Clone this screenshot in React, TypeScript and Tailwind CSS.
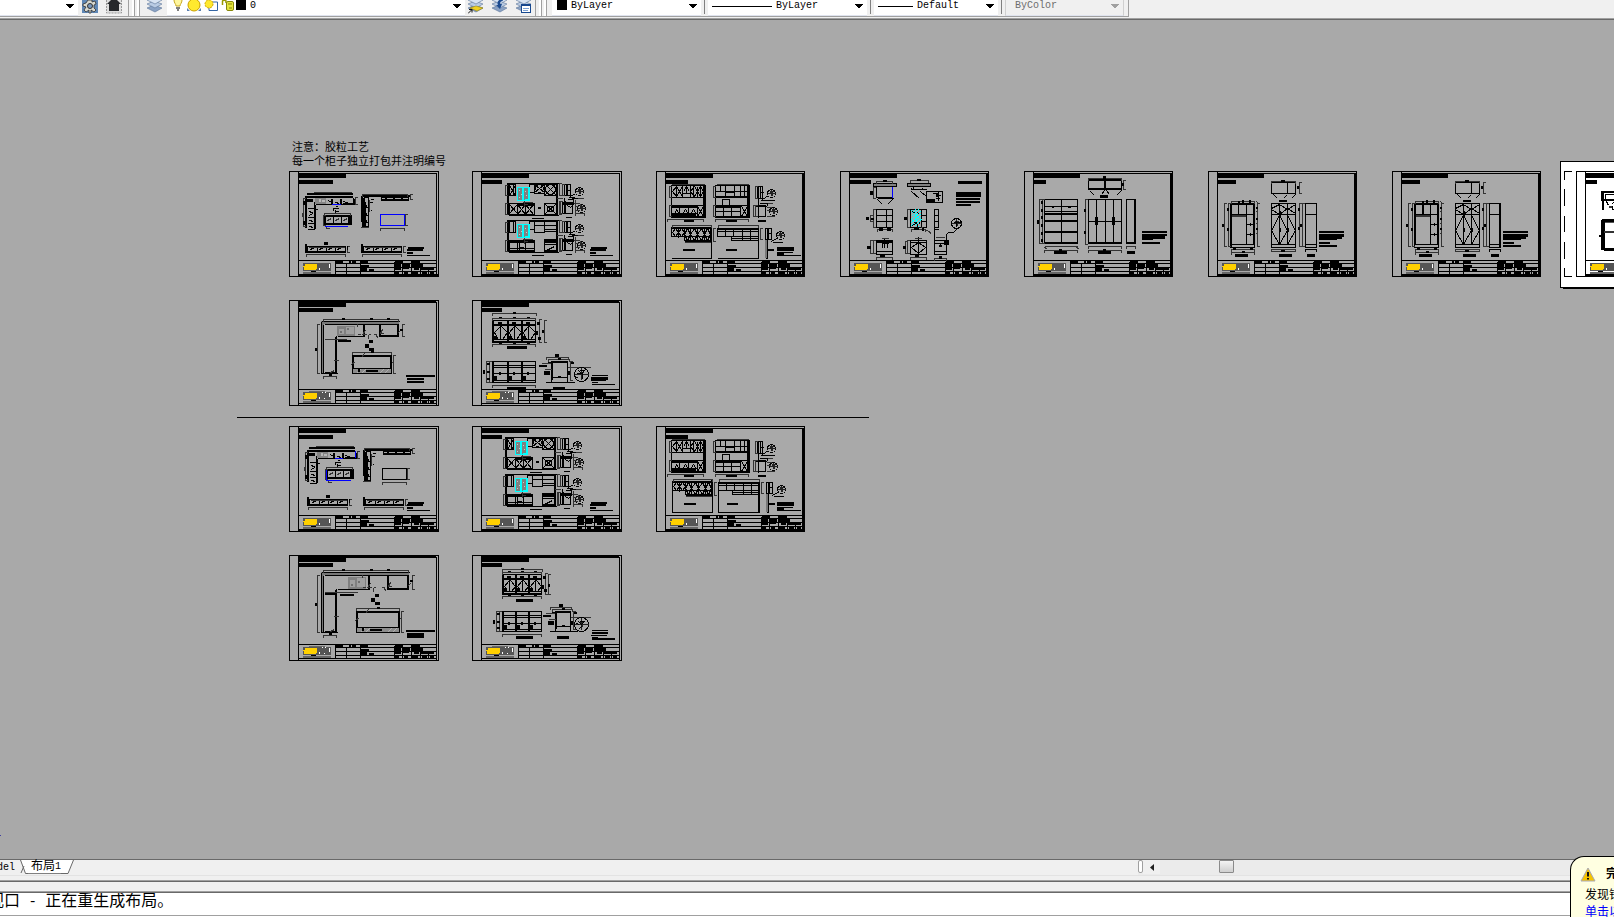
import type { ReactNode } from 'react';

/* ---------- path helpers (drawing units are sheet pixels) ---------- */

const box = (x1: number, y1: number, x2: number, y2: number) => `M${x1} ${y1}H${x2}V${y2}H${x1}Z`;
const h = (y: number, x1: number, x2: number) => `M${x1} ${y}H${x2}`;
const v = (x: number, y1: number, y2: number) => `M${x} ${y1}V${y2}`;
const cross = (x1: number, y1: number, x2: number, y2: number) => `M${x1} ${y1}L${x2} ${y2}M${x2} ${y1}L${x1} ${y2}`;
const mid = (a: number, b: number) => Math.round((a + b) / 2);

/** Horizontal dimension: line, end ticks. */
const hdim = (y: number, x1: number, x2: number) => `${h(y, x1, x2)}${v(x1, y - 1, y + 2)}${v(x2, y - 1, y + 2)}`;
/** Vertical dimension: line, end ticks. */
const vdim = (x: number, y1: number, y2: number) => `${v(x, y1, y2)}${h(y1, x - 1, x + 2)}${h(y2, x - 1, x + 2)}`;
/** Small dimension figure, unreadable at this zoom. */
const fig = (x: number, y: number) => box(x - 1, y - 1, x + 2, y + 1);

function Line({ d, w = 1, c = '#000' }: { d: string; w?: number; c?: string }) {
  return <path d={d} fill="none" stroke={c} strokeWidth={w} transform={w % 2 ? 'translate(.5 .5)' : undefined} />;
}

function Fill({ d, c = '#000' }: { d: string; c?: string }) {
  return <path d={d} fill={c} />;
}

const DIM = '#333';
const CYAN = '#00ffff';
const BLUE = '#0000ff';

/** Round detail callout. */
function Detail({ x, y, r }: { x: number; y: number; r: number }) {
  return (
    <g transform="translate(.5 .5)">
      <circle cx={x} cy={y} r={r} fill="none" stroke="#000" />
      <path d={`M${x - r} ${y}H${x + r}M${x} ${y - r}V${y + r - 2}M${x - 2} ${y - 1}h3v3M${x - 2} ${y - 2}h4`} fill="none" stroke="#222" />
    </g>
  );
}

/* ---------- sheet frame and title block ---------- */

type FrameProps = { sub: number; title?: number; right?: number; heavy?: boolean; low?: boolean };

function Frame({ sub, title = 57, right = 147, heavy, low }: FrameProps) {
  const edge = right + (heavy ? 1 : 2);
  return (
    <>
      <Line d={box(0, 0, edge, 105)} />
      <Line d={h(2, 9, right) + v(9, 0, 105) + v(right, 2, 105) + h(89, 9, right) + h(103, 9, right)} />
      {low ? <Fill d={box(9, 1, right, 3)} /> : <Fill d={box(9, 103, edge, 106)} />}
      {heavy && <Fill d={box(right - 1, 2, right + 1, 105)} />}
      <Fill d={low ? box(10, 1, title, 7) + box(10, 8, sub, 12) : box(9, 2, title, 7) + box(10, 9, sub, 13)} />
      {/* logo */}
      <Fill d={box(14, 92, 42, 100)} c="#555" />
      <Fill d={box(14, 101, 42, 103) + (low ? box(20, 91, 36, 92) : '')} c="#666" />
      <Fill d="M16 93H28V98H27V99H15V96H14V95H16Z" c="#ffd000" />
      <Fill d={box(40, 93, 41, 97) + box(30, 97, 31, 99) + (low ? box(33, 92, 34, 93) + box(36, 92, 37, 93) + box(35, 98, 36, 99) : '')} c="#fff" />
      <Fill d={box(22, 100, 27, 101)} />
      {/* title block */}
      <Line d={v(46, 89, 103) + v(57, 91, 103) + v(71, 91, 103) + v(105, 90, 103) + v(113, 90, 103) + v(122, 90, 103) + v(131, 93, 103) + v(139, 97, 103)} />
      <Line d={h(92, 46, right) + h(96, 46, right) + h(100, 46, right)} />
      <Fill
        d={
          box(47, 90, 54, 93) + box(54, 92, 59, 93) + box(60, 90, 62, 93) + box(63, 90, 67, 92) +
          box(71, 90, 79, 92) + box(71, 94, 80, 96) + box(72, 97, 78, 100) + box(80, 98, 85, 100) +
          box(106, 90, 114, 92) + box(106, 93, 112, 96) + box(114, 93, 121, 96) + box(106, 97, 112, 99) +
          box(106, 101, 110, 103) + box(114, 97, 120, 98) + box(115, 101, 119, 103) + box(122, 90, 131, 92) +
          box(122, 93, 134, 96) + box(125, 97, 130, 99) + box(131, 97, 145, 99) + box(123, 101, 129, 103) +
          box(133, 100, 138, 103) + box(141, 100, 145, 103)
        }
      />
    </>
  );
}

/* ---------- drawings ---------- */

function Notes() {
  return <Fill d={box(119, 76, 135, 78) + box(118, 78, 134, 80) + box(118, 81, 124, 83) + box(118, 84, 141, 85)} />;
}

/** L-shaped run seen in plan, with the plinth plan beside it. */
function KitchenPlan({ second }: { second?: boolean }) {
  const bays = [28, 37, 46];
  const strip = (x: number, y: number) => (
    <>
      <Line d={v(x, y, y + 9) + v(x + 1, y, y + 9) + h(y + 9, x, x + 40) + h(y + 8, x, x + 40) + box(x + 2, y + 3, x + 40, y + 8)} />
      <Line d={bays.map((b) => v(b - 16 + x, y + 3, y + 8)).join('') + `M${x + 5} ${y + 6}l4 -2M${x + 14} ${y + 6}l4 -2M${x + 23} ${y + 6}l4 -2M${x + 32} ${y + 6}l4 -2`} />
      <Line d={hdim(y + 11, x + 1, x + 40) + vdim(x + 42, y + 3, y + 9) + h(y + 4, x + 3, x + 39)} c={DIM} />
    </>
  );
  return (
    <>
      <g transform={second ? 'translate(2 -1)' : undefined}>
        <Fill d={box(18, 22, 64, 24) + box(16, 25, 64, 27) + box(16, 25, 18, 57)} />
        <Fill d={box(26, 27, 37, 33)} c="#858585" />
        <Fill d={box(30, 28, 32, 31) + box(33, 29, 36, 31)} c="#b8b8b8" />
        <Line d={h(33, 26, 65) + v(25, 30, 58) + v(26, 33, 57) + h(58, 18, 25) + v(42, 27, 33) + v(43, 27, 33) + v(51, 27, 33) + v(52, 27, 33) + v(64, 26, 33) + v(65, 27, 33) + h(32, 53, 65) + h(37, 18, 25) + h(46, 18, 25) + h(52, 18, 25)} />
        <Line d="M20 40l4 2M20 44l3 -2M20 49l4 1M20 55l4 1M39 29l3 2M46 31l4 1M54 30l6 2M19 29l4 1M26 34v4h2" />
        <Line d={vdim(14, 27, 55) + vdim(66, 26, 33) + v(13, 41, 45) + h(21, 24, 62)} c={DIM} />
        <Fill d={box(18, 28, 24, 31) + box(14, 30, 16, 34) + box(14, 50, 16, 54)} />
        <Line d="M43 37h6M44 36v3M48 35h-2M46 38v4M45 40h4" />
        <Line d={box(36, 44, 60, 53) + v(44, 44, 53) + v(52, 44, 53) + h(45, 36, 60)} />
        <Fill d={box(59, 44, 63, 54) + box(36, 52, 60, 54) + box(35, 44, 37, 54)} />
        <Line d={hdim(42, 35, 61) + vdim(34, 44, 54) + 'M38 49l4 -2M46 49l4 -2M54 49l4 -2M37 55v2h3'} c={DIM} />
        <Line d={second ? h(33, 43, 51) + v(64, 25, 32) + v(35, 44, 55) + h(55, 35, 59) : h(33, 42, 51) + h(55, 35, 58)} c={BLUE} />
        <Line d={h(24, 72, 121) + h(25, 72, 121) + v(73, 24, 56) + v(72, 24, 50)} />
        <Line d={box(92, 26, 119, 29) + h(28, 92, 119) + box(75, 26, 79, 55) + v(76, 30, 55) + v(74, 26, 55)} />
        <Line d="M94 28l4 -1M102 28l4 -1M110 28l4 -1M76 33l2 4M76 41l2 4M76 48l2 4M81 28h3M80 31h3M80 34v4M81 39h1" />
        <Line d={vdim(121, 23, 28) + hdim(23, 73, 118) + h(56, 71, 79) + v(80, 28, 40)} c={DIM} />
        <Line d={box(91, 43, 115, 54)} c={second ? '#000' : BLUE} />
        <Line d={vdim(116, 43, 54) + hdim(57, 91, 115)} c={DIM} />
      </g>
      <g transform={second ? 'translate(2 -2)' : undefined}>
        {strip(16, 72)}
        {strip(72, 72)}
        <Fill d={box(35, 71, 39, 74) + box(58, 75, 59, 79)} />
      </g>
      <Notes />
    </>
  );
}

/** Wall elevation with range hood and matching side section. */
function HoodElevation({ y, lower }: { y: number; lower?: boolean }) {
  return (
    <g transform={`translate(0 ${y})`}>
      <Fill d={box(35, 0, 37, 32)} />
      <Line d={h(0, 36, 86) + v(85, 0, 31) + v(84, 0, 31) + box(37, 1, 43, 12) + v(41, 1, 12) + box(57, 0, 62, 9) + h(32, 36, 86) + h(1, 57, 84)} />
      <Line d={lower ? box(62, 1, 72, 12) + h(5, 62, 84) + h(9, 72, 84) + box(72, 1, 84, 11) : box(62, 0, 72, 10) + box(72, 0, 84, 12) + cross(62, 1, 72, 9) + cross(72, 0, 84, 12) + cross(37, 2, 43, 12)} />
      {!lower && (
        <g fill="none" stroke="#000" transform="translate(.5 .5)">
          <circle cx="67" cy="5" r="4" />
          <circle cx="78" cy="6" r="5" />
        </g>
      )}
      <Line d={box(37, 20, 45, 31) + box(45, 20, 62, 31) + box(72, 20, 84, 31) + h(22, 46, 62) + v(53, 20, 31)} />
      <Line d={lower ? h(22, 37, 62) + h(28, 37, 62) + h(30, 37, 62) + h(22, 72, 84) + h(24, 72, 84) + v(47, 20, 31) + 'M74 30l8 -4' : cross(37, 21, 45, 30) + cross(45, 21, 53, 31) + cross(53, 21, 61, 31) + cross(72, 20, 84, 31) + box(75, 23, 81, 28)} />
      <Fill d={lower ? box(36, 20, 63, 22) + box(72, 19, 85, 22) + box(47, 27, 52, 29) + box(72, 30, 85, 32) : box(66, 24, 69, 26) + box(45, 20, 62, 22)} />
      <Line d={vdim(33, 2, 12) + vdim(33, 20, 31) + vdim(87, 0, 12) + vdim(87, 18, 31) + h(15, 84, 90) + 'M48 17h9M50 19h10M52 15v8M51 21h4'} c={DIM} />
      <Fill d={box(45, 4, 57, 18)} c="#808080" />
      <Line d={box(45, 4, 57, 17) + v(51, 4, 17) + v(50, 4, 17) + h(16, 52, 57) + v(56, 4, 15) + h(4, 44, 57)} c={CYAN} />
      <Fill d={box(47, 7, 48, 8) + box(49, 11, 50, 12) + box(47, 14, 48, 15) + box(53, 8, 54, 9) + box(54, 12, 55, 13)} c="#c8c8c8" />
      <Line d={box(92, 1, 98, 12) + v(95, 1, 12) + v(94, 1, 12) + h(7, 94, 98) + h(14, 96, 102) + 'M98 13L103 10M99 15h12'} />
      <Detail x={107} y={8} r={4} />
      <Line d={box(90, 19, 100, 30) + v(93, 17, 30) + v(92, 14, 30) + h(21, 90, 101) + h(20, 90, 101) + 'M95 22l3 2 3 -2M95 16h6v4'} />
      <Detail x={109} y={25} r={4} />
      <Line d={vdim(90, 1, 12) + vdim(88, 18, 30) + h(15, 105, 111) + v(103, 16, 30) + hdim(30, 103, 112) + 'M101 20h6l2 3M102 23h4M102 27h5'} c={DIM} />
      <Fill d={box(60, 35, 72, 36) + box(94, 34, 100, 35)} />
    </g>
  );
}

function HoodSheet({ second }: { second?: boolean }) {
  return (
    <>
      <g transform={second ? 'translate(-2 -1)' : undefined}>
        <HoodElevation y={12} />
        <HoodElevation y={49} lower />
      </g>
      <Notes />
    </>
  );
}

/** Two wall elevations above, two low runs below. */
function WallSheet({ second }: { second?: boolean }) {
  return (
    <>
      <g>
        <Line d={box(15, 14, 49, 46) + v(47, 14, 46) + h(26, 15, 47) + h(34, 15, 47) + h(36, 15, 41) + h(45, 15, 49)} />
        <Line d={v(26, 14, 26) + v(34, 14, 26) + v(41, 15, 26) + v(23, 34, 46) + v(32, 34, 46) + v(41, 34, 46) + cross(41, 35, 47, 45) + h(22, 26, 34)} />
        <Line d={'M20 14V26M30 14V22M37 14V26M44 14V26M16 20L20 15L26 25M16 20L20 25L26 15M34 20L38 15L41 20L38 25ZM41 20L44 15L47 20L44 25ZM27 20L30 15L33 20M18 43L20 38L23 43M26 43L29 38L32 43M34 43L37 38L40 43' + h(42, 15, 41)} />
        <Line d={box(59, 14, 93, 46) + v(91, 14, 46) + h(26, 59, 91) + h(25, 59, 91) + h(20, 59, 91) + h(34, 59, 91) + h(36, 59, 84) + h(40, 59, 84) + cross(85, 35, 91, 45) + h(45, 59, 93)} />
        <Line d={v(69, 14, 26) + v(78, 14, 26) + v(84, 14, 26) + v(88, 14, 26) + v(64, 14, 20) + v(67, 34, 46) + v(75, 34, 46) + v(84, 34, 46) + box(66, 28, 73, 34)} />
        <Fill d={box(15, 34, 41, 36) + box(59, 34, 85, 36) + box(15, 43, 40, 45) + box(69, 20, 78, 22) + box(48, 14, 50, 47) + box(92, 14, 94, 47)} />
        <Line d={vdim(13, 15, 26) + vdim(13, 34, 45) + hdim(48, 11, 47) + hdim(48, 59, 92) + vdim(57, 15, 26) + vdim(57, 34, 45) + h(13, 15, 48) + h(13, 60, 92)} c={DIM} />
        <Line d={box(101, 15, 106, 27) + v(104, 15, 27) + v(102, 15, 46) + h(21, 104, 107) + box(102, 34, 109, 45) + h(35, 99, 110) + 'M106 28L112 24M104 29h14M103 32h8v2'} />
        <Detail x={115} y={22} r={4} />
        <Detail x={117} y={40} r={4} />
        <Line d={vdim(99, 15, 27) + vdim(99, 34, 45) + vdim(97, 34, 45) + h(45, 110, 118) + h(32, 111, 116) + 'M110 36h5M110 39h4'} c={DIM} />
        <Fill d={box(28, 49, 38, 51) + box(70, 49, 81, 51) + box(102, 49, 110, 51)} />
      </g>
      <g transform={second ? 'translate(1 -1)' : undefined}>
        <Line d={box(15, 56, 55, 65) + box(28, 57, 54, 69) + v(55, 54, 87) + h(87, 15, 55) + h(57, 15, 55) + h(70, 28, 54)} />
        <Line d="M22 57V66M34 57V69M41 57V69M48 57V69M28 63L31 57L34 63L31 69ZM34 63L38 57L41 63L38 69ZM41 63L45 57L48 63L45 69ZM48 63L51 57L54 63L51 69ZM16 61L19 57L22 61L19 65ZM22 61L25 57L28 61L25 65Z" />
        <Line d={box(61, 57, 102, 65) + h(60, 61, 102) + h(58, 61, 102) + box(75, 65, 102, 69) + h(67, 75, 102) + v(69, 57, 65) + v(77, 57, 65) + v(86, 57, 69) + v(94, 57, 69) + v(102, 56, 87) + h(87, 61, 102)} />
        {second && <Line d={v(15, 65, 87) + v(61, 65, 87) + v(54, 54, 70) + v(101, 56, 87)} />}
        <Line d={hdim(54, 16, 55) + hdim(54, 62, 102) + vdim(57, 57, 70) + h(71, 28, 54) + vdim(104, 57, 68)} c={DIM} />
        <Fill d={box(109, 68, 111, 87)} c="#777" />
        <Line d={box(109, 57, 115, 68) + v(112, 57, 68) + h(62, 112, 115) + 'M115 70L122 66M116 71h10'} />
        <Line d={v(111, 57, 87) + h(87, 109, 111)} />
        <Detail x={124} y={64} r={4} />
        <Fill d={box(27, 78, 39, 80) + box(70, 78, 81, 80) + box(112, 78, 118, 80)} />
      </g>
      <Fill d={box(121, 76, 138, 80) + box(121, 81, 137, 82) + box(121, 82, 128, 84) + box(121, 84, 145, 85)} />
    </>
  );
}

function VanitySheet() {
  return (
    <>
      <Fill d={box(33, 12, 57, 16) + box(67, 12, 91, 16)} c="#808080" />
      <Line d={box(33, 12, 56, 15) + box(67, 12, 90, 15)} />
      <Line d={box(36, 15, 52, 26) + h(27, 37, 53) + 'M37 28L42 33M52 28L47 33M71 16V18H82V16M71 20L79 27M80 20L86 25M73 15v3H86'} />
      <Fill d={box(52, 16, 53, 26)} c={BLUE} />
      <Line d={v(52, 16, 26)} c={BLUE} />
      <Line d={box(86, 20, 102, 31) + 'M92 22h6M98 20v9M95 24h5M95 27h4'} />
      <Fill d={box(87, 28, 95, 31) + box(96, 22, 99, 26)} />
      <Line d={hdim(10, 36, 52) + hdim(9, 70, 88) + vdim(33, 16, 27)} c={DIM} />
      <Fill d={box(43, 9, 47, 11) + box(77, 8, 81, 10) + box(30, 20, 33, 24)} />
      <Fill d={box(118, 10, 142, 13) + box(116, 21, 141, 26) + box(116, 27, 140, 29) + box(116, 30, 140, 32) + box(116, 33, 131, 35)} />
      {/* front views */}
      <Line d={box(36, 38, 52, 56) + v(46, 38, 56) + h(44, 36, 52) + h(50, 36, 52) + box(70, 38, 86, 56) + v(81, 38, 56) + h(44, 81, 86) + h(50, 81, 86)} />
      <Line d="M71 42L75 38M71 45L78 38M71 48L81 39M71 51L81 42M71 54L81 45M74 55L81 48M71 39L81 49M72 49L79 56" c={CYAN} />
      <Line d="M72 40l3 2M77 41l2 2M73 51h3M72 54l5 -3M77 52v3M79 50v2" />
      <Line d={box(94, 38, 98, 56) + h(44, 94, 98) + h(50, 94, 98) + v(94, 56, 70) + h(58, 94, 98)} />
      <Line d={vdim(33, 38, 56) + vdim(30, 44, 50) + vdim(67, 38, 56) + hdim(58, 37, 52) + hdim(58, 71, 85) + 'M81 56L90 61M90 60v2'} c={DIM} />
      <Fill d={box(26, 46, 29, 49) + box(31, 47, 34, 49) + box(64, 46, 67, 49) + box(39, 57, 43, 60) + box(47, 57, 51, 60) + box(74, 57, 79, 59) + box(82, 57, 84, 60)} />
      <Detail x={116} y={52} r={5} />
      <Line d="M116 58L113 61H108L106 63V69M116 49v6M113 51h7" />
      {/* base units */}
      <Line d={box(36, 69, 52, 83) + h(71, 36, 52) + h(80, 36, 52) + v(42, 72, 76) + v(44, 66, 76) + v(47, 72, 76) + h(72, 41, 48)} />
      <Line d={box(70, 69, 86, 83) + h(71, 70, 86) + v(78, 65, 83) + 'M78 71L71 76L78 82L85 76Z'} />
      <Line d={box(94, 69, 106, 83) + h(80, 94, 106) + h(72, 94, 106) + v(100, 71, 75)} />
      <Fill d={box(104, 69, 109, 74) + box(36, 69, 53, 71) + box(99, 74, 102, 76)} />
      <Line d={vdim(33, 69, 82) + vdim(30, 69, 82) + vdim(67, 69, 82) + vdim(65, 70, 82) + hdim(86, 36, 52) + hdim(86, 70, 86) + hdim(87, 94, 106) + h(67, 41, 48) + h(67, 74, 81) + h(66, 95, 104)} c={DIM} />
      <Fill d={box(27, 75, 31, 78) + box(63, 75, 66, 78) + box(40, 84, 45, 86) + box(75, 84, 79, 86) + box(99, 85, 102, 88)} />
    </>
  );
}

function WardrobeSheet() {
  return (
    <>
      <Line d={box(20, 28, 53, 72) + v(37, 28, 72) + h(35, 20, 53) + h(40, 20, 53)} />
      <Fill d={box(20, 42, 54, 44) + box(20, 49, 54, 51) + box(20, 60, 54, 62) + box(20, 71, 54, 73) + box(28, 35, 30, 37) + box(44, 35, 47, 37)} />
      <Line d={vdim(15, 28, 72) + vdim(18, 28, 72) + hdim(75, 21, 53) + hdim(79, 20, 53) + 'M20 76l3 2M52 76l3 2'} c={DIM} />
      <Fill d={[30, 38, 45, 53, 61, 68].map((y) => box(17, y, 19, y + 3)).join('') + box(13, 49, 15, 53) + box(35, 78, 38, 80)} />
      {/* plan */}
      <Line d={box(64, 8, 97, 18) + v(80, 8, 18) + v(81, 8, 18)} />
      <Fill d={box(64, 8, 98, 10) + box(64, 17, 98, 19)} />
      <Line d="M66 20L70 24M77 23L80 19M82 19L85 23M97 19L92 24" />
      <Line d={hdim(7, 64, 97) + vdim(99, 9, 18)} c={DIM} />
      <Fill d={box(79, 5, 82, 8) + box(98, 12, 100, 15) + box(76, 24, 84, 27)} />
      {/* doors */}
      <Line d={box(64, 28, 97, 72) + v(72, 28, 72) + v(81, 28, 72) + v(89, 28, 72) + h(50, 64, 97)} />
      <Fill d={box(71, 46, 74, 54) + box(88, 46, 91, 54) + box(64, 71, 98, 73)} />
      <Line d={box(102, 28, 111, 72)} />
      <Fill d={box(110, 28, 112, 73) + box(102, 71, 111, 73)} />
      <Line d={vdim(61, 28, 73) + hdim(75, 64, 97) + hdim(79, 64, 97) + hdim(75, 102, 111)} c={DIM} />
      <Fill d={box(60, 38, 62, 41) + box(60, 60, 62, 63) + box(79, 78, 82, 80) + box(30, 80, 43, 83) + box(74, 80, 87, 83) + box(103, 80, 111, 83)} />
      <Fill d={box(118, 60, 143, 62) + box(118, 63, 143, 65) + box(118, 64, 141, 68) + box(118, 68, 129, 69) + box(118, 71, 136, 73)} />
    </>
  );
}

function CupboardSheet({ second }: { second?: boolean }) {
  return (
    <>
      <Line d={box(22, 32, 46, 76) + box(23, 33, 45, 73) + v(30, 33, 43) + v(38, 33, 73) + h(43, 22, 46) + h(53, 38, 46) + h(63, 38, 46) + v(42, 51, 54) + v(42, 61, 64)} />
      <Fill d={box(24, 44, 38, 46)} c={DIM} />
      <Fill d={second ? box(30, 33, 32, 43) + box(22, 32, 24, 44) : box(22, 32, 24, 76)} />
      <Line d={vdim(16, 32, 75) + vdim(20, 32, 75) + vdim(49, 32, 75) + hdim(30, 23, 46) + hdim(78, 23, 46) + hdim(81, 23, 46) + 'M48 30l2 2M48 40l2 2M48 52l2 2M48 62l2 2'} c={DIM} />
      <Fill d={box(14, 53, 16, 56) + box(19, 37, 21, 40) + box(19, 57, 21, 60) + box(30, 30, 32, 32) + box(34, 29, 36, 32) + box(41, 29, 43, 32) + fig(35, 81) + fig(26, 78) + fig(43, 78) + box(48, 36, 50, 38) + box(48, 47, 50, 49) + box(48, 57, 50, 59)} />
      <Line d={box(63, 11, 87, 22) + v(79, 11, 22) + 'M65 23L69 27M78 24L75 27M87 23L83 27'} />
      <Fill d={box(63, 11, 88, 12)} />
      <Line d={hdim(10, 63, 87) + vdim(91, 11, 22)} c={DIM} />
      <Fill d={box(73, 9, 77, 11) + box(89, 15, 91, 18) + box(71, 29, 79, 31)} />
      <Line d={box(63, 32, 87, 76) + v(71, 32, 73) + v(79, 32, 73) + h(43, 63, 87) + h(73, 63, 87)} />
      <Line d="M63 37L71 33L79 38L87 33M63 38L71 43L79 37L87 42M71 44L63 59L71 73L79 59ZM79 44L87 59L79 73" />
      <Fill d={box(71, 40, 73, 45) + box(71, 57, 73, 61) + box(79, 57, 81, 61)} />
      <Line d={vdim(91, 32, 75) + vdim(94, 32, 75) + hdim(78, 63, 87) + h(80, 63, 87)} c={DIM} />
      <Fill d={box(90, 37, 92, 40) + box(90, 56, 92, 59) + box(92, 53, 94, 56) + box(73, 79, 77, 81)} />
      <Line d={box(97, 32, 108, 76) + h(43, 97, 108) + h(73, 97, 108) + hdim(78, 97, 108)} />
      <Fill d={box(27, 83, 40, 86) + box(71, 83, 84, 86) + box(99, 83, 107, 86) + (second ? box(107, 32, 109, 76) : '')} />
      <Fill d={box(111, 60, 136, 62) + box(111, 63, 136, 66) + box(111, 66, 134, 68) + box(111, 68, 129, 69) + box(111, 71, 122, 73) + box(111, 74, 129, 76)} />
    </>
  );
}

function CountertopPlan({ second }: { second?: boolean }) {
  // right end, top, inner bottom, bottom of the leg
  const [x2, y1, y2, y3] = second ? [119, 17, 34, 77] : [109, 21, 36, 73];
  const [gapL, gapR, sink] = second ? [80, 98, 59] : [75, 90, 48];
  const isl = second ? [67, 56, 110, 77] : [63, 55, 102, 73];
  const sym = second ? [86, 39] : [80, 40];
  return (
    <>
      <Fill d={box(32, y1, x2 + 1, y1 + 3) + box(32, y1, 35, y3 + 1)} c="#777" />
      <Line d={h(y1, 32, x2 + 1) + v(32, y1, y3) + h(y1 + 3, 35, x2) + v(34, y1 + 3, y3) + h(y2, 48, gapL) + v(46, y2, y3) + v(47, y2 - 1, y3) + h(y3, 32, 48) + h(y3 - 1, 35, 47)} />
      <Line d={v(gapL, y1 + 3, y2) + v(gapL - 1, y1 + 3, y2) + v(gapR, y1 + 3, y2) + v(gapR + 1, y1 + 3, y2) + v(x2, y1 + 3, y2) + v(x2 - 1, y1 + 3, y2) + h(y2, gapR, x2) + h(y2 - 1, gapR, x2)} />
      <Line d={h(y2 + 3, 35, second ? 68 : 57)} c={DIM} />
      <Fill d={box(sink, y1 + 5, sink + 18, y2)} c="#808080" />
      <Fill d={box(sink + 2, y1 + 8, sink + 7, y2 - 2) + box(sink + 9, y1 + 6, sink + 17, y2 - 2)} c="#a0a0a0" />
      <Fill d={box(sink + 3, y2 - 5, sink + 5, y2 - 3) + box(sink + 10, y2 - 8, sink + 12, y2 - 6)} c="#707070" />
      <Line d={hdim(y1 - 2, 34, x2) + vdim(28, y1 + 3, y3) + vdim(x2 + 4, y1 + 3, y2) + hdim(y3 + 3, 34, 47)} c={DIM} />
      <Line
        d={`M${gapL + 1} ${y2 - 6}l-3 4h4M${gapL + 4} ${y2 + 2}v-3l3 -2M${gapR - 2} ${y2 + 2}l-1 -4h-3M${gapR + 3} ${y2 - 7}l-2 4h3M${x2 - 1} ${y2 - 3}l3 -3M44 ${mid(y2, y3) + 5}h5M41 ${y3 - 1}l4 -2M${gapL - 7} ${y1 + 2}v3M${gapL - 7} ${y2 - 2}h3`}
        c={DIM}
      />
      <Fill d={fig(54, y1 - 2) + fig(82, y1 - 2) + fig(99, y1 - 2) + box(26, 48, 28, 51) + fig(x2 + 3, y1 + 9) + fig(41, y3 + 2)} />
      <Fill d={second ? box(36, 38, 46, 40) + box(51, 39, 65, 41) : box(49, 40, 62, 42)} />
      <Fill d={box(sym[0], sym[1], sym[0] + 4, sym[1] + 3) + box(sym[0] - 4, sym[1] + 4, sym[0], sym[1] + 8) + box(sym[0], sym[1] + 8, sym[0] + 5, sym[1] + 11)} />
      {/* island */}
      <Fill d={box(isl[0], isl[3] - 5, isl[2], isl[3])} c="#8b8b8b" />
      <Line d={`M${isl[0] + 4} ${isl[3]}l4 -4M${isl[0] + 9} ${isl[3]}l4 -4M${isl[2] - 12} ${isl[3]}l4 -4M${isl[2] - 7} ${isl[3]}l4 -4`} c="#b0b0b0" />
      <Line d={box(isl[0], isl[1], isl[2], isl[3]) + h(isl[1] + 1, isl[0], isl[2]) + h(isl[3] - 5, isl[0], isl[2]) + v(isl[0] + 1, isl[1], isl[3] - 5) + v(isl[2] - 1, isl[1], isl[3] - 5)} />
      <Line d={hdim(isl[1] - 3, isl[0], isl[2]) + vdim(isl[2] + 2, isl[1], isl[3]) + `M${isl[0] + 9} ${isl[1] + 2}l3 -4M${isl[0] - 1} ${isl[1] + 9}l4 -3M${isl[2] - 2} ${isl[1] + 7}h4`} c={DIM} />
      <Fill d={box(isl[0] + 14, isl[3] - 3, isl[0] + 26, isl[3] - 1) + fig(mid(isl[0], isl[2]), isl[1] - 3) + box(isl[0] + 6, isl[3] - 4, isl[0] + 8, isl[3] - 1) + box(isl[2] - 1, isl[1] + 4, isl[2] + 1, isl[1] + 10)} />
      <Fill d={box(117, 75, 146, 77) + (second ? box(118, 78, 135, 83) : box(118, 78, 135, 80) + box(118, 81, 135, 83))} />
    </>
  );
}

function IslandSheet({ second }: { second?: boolean }) {
  const xs = second ? [30, 43, 56, 69] : [20, 35, 49, 63];
  const [t, b] = second ? [19, 39] : [20, 42];
  const [t2, b2] = second ? [56, 76] : [61, 82];
  const [l, r] = [xs[0], xs[3]];
  const [s1, s2] = second ? [83, 98] : [79, 95];
  return (
    <>
      <Line d={box(l, t, r, b) + xs.map((x) => v(x, t, b) + (x < r ? v(x + 1, t, b) : '')).join('') + h(t + 4, l, r) + h(t + 5, l, r) + h(b - 3, l, r) + h(b - 1, l, r)} />
      {xs.slice(0, 3).map((x, i) => {
        const c = mid(x, xs[i + 1]);
        return (
          <g key={x}>
            <Line d={`M${c} ${t + 4}V${b - 3}M${c} ${t + 6}L${x + 2} ${t + 12}L${c - 2} ${b - 3}M${c + 1} ${t + 6}L${xs[i + 1]} ${t + 12}L${c + 2} ${b - 3}`} />
            <Fill d={box(c - 2, t + 2, c + 2, t + 6) + box(x + 1, b - 6, x + 5, b - 3) + box(x + 2, b2 - 6, x + 5, b2 - 2) + box(c - 1, t2 + 11, c + 1, t2 + 14)} />
            <Fill d={fig(c, b + 2) + fig(c, t - 2)} />
          </g>
        );
      })}
      <Line d={hdim(t - 7 + (second ? 2 : 0), l, r + 1) + hdim(t - 2, l, r) + vdim(r + 4, t - 1, b) + vdim(r + 9 - (second ? 2 : 0), t, b) + hdim(b + 2, l, r)} c={DIM} />
      <Fill d={fig(mid(l, r), t - 7 + (second ? 2 : 0)) + box(r + 2, t + 2, r + 5, t + 5) + box(r + 1, t + 11, r + 3, t + 15) + box(r + 3, b - 5, r + 6, b - 2) + box(r + 7, t + 10, r + 9, t + 13)} />
      <Line d={box(l, t2, r, b2) + xs.map((x) => v(x, t2, b2) + (x < r ? v(x + 1, t2, b2) : '')).join('') + h(t2 + 4, l, r) + h(t2 + 6, l, r) + h(t2 + 12, l, r) + h(b2 - 2, l, r)} />
      <Line d={vdim(l - 3, t2, b2) + vdim(l - 6, t2, b2) + hdim(b2 + 3, l, r)} c={DIM} />
      <Fill d={box(l - 9, t2 + 9, l - 7, t2 + 13) + fig(l - 4, t2 + 3) + fig(l - 4, b2 - 3) + fig(l - 4, t2 + 11)} />
      {/* side section */}
      <Line d={box(s1, t2, s2, b2) + v(s1 + 1, t2, b2 - 3) + h(t2 + 1, s1 - 4, s2) + h(b2 - 5, s1, s2) + h(b2, s1 - 6, s2 + 7)} />
      <Line d={hdim(t2 - 2, s1 - 3, s2 + 2) + hdim(t2 - 4, s1 - 5, s2 + 1) + vdim(s2 + 3, t2, b2 - 2) + h(t2 + 6, s2, 118) + `M${s1} ${t2 + 8}h-7M${s1 - 1} ${t2 + 2}h-9`} c={DIM} />
      <Fill d={box(mid(s1, s2) - 4, t2 - 7, mid(s1, s2), t2 - 4) + fig(mid(s1, s2), t2 - 2) + fig(mid(s1, s2), b2 - 5) + box(s1 - 12, t2 + 4, s1 - 4, t2 + 6) + box(s1 - 7, t2 + 10, s1 - 1, t2 + 14) + box(s2 + 1, t2 + 10, s2 + 3, t2 + 14) + fig(s2 + 5, t2 + 2)} />
      <Detail x={109} y={second ? 69 : 74} r={7} />
      <Line d={second ? 'M106 66l3 3 3 -3M107 66h5M109 71l-3 3M104 68l3 1' : 'M106 70l3 3 3 -3M107 70h4M104 73h6v5M103 76l3 2'} />
      <Fill
        d={
          second
            ? box(44, 44, 61, 47) + box(44, 81, 61, 84) + box(85, 81, 97, 84) + box(120, 75, 136, 76) + box(120, 77, 136, 79) + box(119, 80, 135, 81) + box(120, 82, 126, 83) + box(120, 83, 143, 85)
            : box(35, 46, 55, 49) + box(35, 87, 54, 89) + box(81, 87, 93, 89) + box(120, 75, 136, 76) + box(119, 77, 136, 80) + box(119, 80, 134, 81) + box(120, 82, 126, 83) + box(120, 84, 143, 85)
        }
      />
    </>
  );
}

function EdgeSheet() {
  return (
    <>
      <Fill d={box(25, 20, 40, 22) + box(25, 20, 28, 30) + box(26, 30, 28, 39) + box(28, 28, 40, 30) + box(26, 48, 40, 51) + box(25, 49, 29, 79) + box(28, 77, 40, 80) + box(23, 64, 25, 66)} />
      <Fill d={box(29, 51, 40, 52)} c="#555" />
      <Line d={h(60, 28, 40) + v(29, 22, 28) + h(23, 29, 40) + 'M30 30l2 4M35 33l3 -3M33 35h3v3M36 38h2M37 84h3'} />
      <Fill d={box(28, 60, 38, 62) + box(33, 35, 36, 37)} c={DIM} />
    </>
  );
}

/* ---------- sheets on the canvas ---------- */

type SheetDef = { at: string; name: string; frame: FrameProps; art: ReactNode };

const sheets: SheetDef[] = [
  { at: 'left-[289px] top-[151px]', name: 'Plan 1', frame: { sub: 44 }, art: <KitchenPlan /> },
  { at: 'left-[472px] top-[151px]', name: 'Elevation 1', frame: { sub: 30 }, art: <HoodSheet /> },
  { at: 'left-[656px] top-[151px]', name: 'Elevation 2', frame: { sub: 32, heavy: true }, art: <WallSheet /> },
  { at: 'left-[840px] top-[151px]', name: 'Vanity', frame: { sub: 31, heavy: true }, art: <VanitySheet /> },
  { at: 'left-[1024px] top-[151px]', name: 'Wardrobe', frame: { sub: 22, title: 56, heavy: true }, art: <WardrobeSheet /> },
  { at: 'left-[1208px] top-[151px]', name: 'Cupboard 1', frame: { sub: 28, title: 56, heavy: true }, art: <CupboardSheet /> },
  { at: 'left-[1392px] top-[151px]', name: 'Cupboard 2', frame: { sub: 28, title: 56, heavy: true }, art: <CupboardSheet second /> },
  { at: 'left-[1576px] top-[151px]', name: 'Cupboard 3', frame: { sub: 21, title: 56, heavy: true }, art: <EdgeSheet /> },
  { at: 'left-[289px] top-[280px]', name: 'Countertop 1', frame: { sub: 44, low: true }, art: <CountertopPlan /> },
  { at: 'left-[472px] top-[280px]', name: 'Island 1', frame: { sub: 30, low: true }, art: <IslandSheet /> },
  { at: 'left-[289px] top-[406px]', name: 'Plan 2', frame: { sub: 44 }, art: <KitchenPlan second /> },
  { at: 'left-[472px] top-[406px]', name: 'Elevation 3', frame: { sub: 30 }, art: <HoodSheet second /> },
  { at: 'left-[656px] top-[406px]', name: 'Elevation 4', frame: { sub: 32, heavy: true }, art: <WallSheet second /> },
  { at: 'left-[289px] top-[535px]', name: 'Countertop 2', frame: { sub: 44, low: true }, art: <CountertopPlan second /> },
  { at: 'left-[472px] top-[535px]', name: 'Island 2', frame: { sub: 30, low: true }, art: <IslandSheet second /> },
];

function Canvas() {
  return (
    <main className="relative min-h-[660px] flex-1 overflow-hidden bg-[#a9a9a9]">
      <p className="absolute left-[292px] top-[119px] whitespace-nowrap text-[11px] leading-[14px] text-black">
        {'注意\uff1a胶粒工艺'}
        <br />
        每一个柜子独立打包并注明编号
      </p>

      {/* paper of the active layout */}
      <div className="absolute left-[1563px] top-[144px] h-[125px] w-[200px] bg-black" />
      <div className="absolute left-[1560px] top-[141px] h-[127px] w-[200px] border border-black bg-white" />
      <svg className="absolute left-[1564px] top-[151px]" width="8" height="106" shapeRendering="crispEdges" aria-hidden="true">
        <path d="M8 .5H.5V9M.5 18V35M.5 45V61M.5 71V88M.5 97V105.5H8" fill="none" stroke="#000" />
      </svg>

      {sheets.map(({ at, name, frame, art }) => (
        <svg key={name} className={`absolute ${at}`} width="150" height="106" viewBox="0 0 150 106" shapeRendering="crispEdges" role="img" aria-label={name}>
          <Frame {...frame} />
          {art}
        </svg>
      ))}

      <div className="absolute left-[237px] top-[397px] h-px w-[632px] bg-black" />
      <div className="absolute left-0 top-[815px] h-px w-px bg-[#4040a0]" />
    </main>
  );
}

/* ---------- toolbar ---------- */

function Arrow({ className }: { className: string }) {
  return (
    <svg className={`pointer-events-none shrink-0 ${className}`} width="8" height="5" shapeRendering="crispEdges" aria-hidden="true">
      <path d="M0 0H8V1H7V2H6V3H5V4H3V3H2V2H1V1H0Z" fill="currentColor" />
    </svg>
  );
}

function Combo({ label, value, width, lead, disabled }: { label: string; value: string; width: string; lead?: ReactNode; disabled?: boolean }) {
  return (
    <div className={`flex h-[16px] shrink-0 items-start border-b border-[#dfe3ee] ${disabled ? 'bg-[#f0f0f0]' : 'bg-white'} ${width}`}>
      <div className="flex h-[12px] flex-1 items-center gap-1 pr-1">
        {lead}
        <select
          aria-label={label}
          disabled={disabled}
          className={`h-[12px] min-w-0 flex-1 appearance-none bg-transparent p-0 font-['Liberation_Mono',monospace] text-[10px] leading-[12px] outline-none ${disabled ? 'text-[#6d6d6d] opacity-100' : 'text-black'}`}
        >
          <option>{value}</option>
        </select>
        <Arrow className={disabled ? 'text-[#a0a0a0]' : 'text-black'} />
      </div>
    </div>
  );
}

function Grip() {
  return (
    <span className="flex h-4 shrink-0 gap-[2px] px-[3px]" aria-hidden="true">
      <span className="w-[3px] border-r border-[#a0a0a0] bg-white" />
      <span className="w-[3px] border-r border-[#a0a0a0] bg-white" />
    </span>
  );
}

function ToolButton({ label, children }: { label: string; children: ReactNode }) {
  return (
    <button type="button" aria-label={label} className="h-[14px] w-4 shrink-0">
      <svg width="16" height="14" viewBox="0 0 16 14" aria-hidden="true">
        {children}
      </svg>
    </button>
  );
}

const stack = (
  <>
    <path d="M0 8L7 5L15 8L8 12Z" fill="#8aa2c4" stroke="#5c7699" strokeWidth=".6" />
    <path d="M0 4L7 1L15 4L8 8Z" fill="#b9cbe3" stroke="#5c7699" strokeWidth=".6" />
    <path d="M0 0L7 -3L15 0L8 4Z" fill="#d7e3f2" stroke="#5c7699" strokeWidth=".6" />
  </>
);

function LayerState() {
  return (
    <svg width="73" height="12" viewBox="0 0 73 12" className="shrink-0" aria-hidden="true">
      {/* on */}
      <path d="M1 0C1 3 3 4 3 6H7C7 4 9 3 9 0" fill="#fff7a0" stroke="#c9a820" />
      <path d="M3 8H7M4 10H6" stroke="#555" strokeWidth="1.5" />
      {/* thawed */}
      <path d="M14 11V8L17 11ZM28 11V8L25 11Z" fill="#5b7fb0" />
      <circle cx="21" cy="5" r="6" fill="#ffe92e" stroke="#c9a000" />
      {/* thawed in viewport */}
      <path d="M37 2H44.500V10.500H36V8" fill="#fff" stroke="#3465a4" />
      <circle cx="36" cy="4" r="4" fill="#ffe92e" stroke="#d0a800" strokeDasharray="2 1" />
      {/* unlocked */}
      <path d="M49.500 5V1C50 0 53 0 53 1V3" fill="none" stroke="#9a9a00" strokeWidth="1.5" />
      <rect x="53.500" y="1.500" width="7" height="9" rx="1.500" fill="#e4e43c" stroke="#87870c" />
      <path d="M55 4h4M56 8h3" stroke="#87870c" />
      {/* colour */}
      <rect x="63" width="10" height="10" fill="#000" shapeRendering="crispEdges" />
    </svg>
  );
}

const separator = 'mx-[3px] h-[14px] w-px shrink-0 bg-[#808080]';

function Toolbar() {
  return (
    <header className="border-b border-[#696969] bg-[#f0f0f0]">
      <div className="flex h-[18px] items-start overflow-hidden">
        <div className="flex h-[17px] shrink-0 items-start border-b border-r border-[#a0a0a0]">
          <Combo label="Workspace" value="" width="w-[78px]" />
          <div className="flex gap-2 pl-1 pr-[6px]">
            <ToolButton label="Workspace settings">
              <rect width="16" height="13" fill="#5f87b5" />
              <path d="M6 0h4v2l3-1 1 3-2 1v3l2 2-2 2-3-2v3H7v-3l-3 2-2-2 2-3-3-1V4l3-1z" fill="#d8d8ce" stroke="#333" strokeWidth=".8" />
              <circle cx="8" cy="6" r="2.500" fill="#7797bd" stroke="#333" />
            </ToolButton>
            <ToolButton label="My workspace">
              <rect x=".5" y="-3" width="15" height="16" fill="#ddd" stroke="#999" strokeDasharray="2 1" />
              <path d="M3 11V4H1L8 -3L15 4H13V11Z" fill="#26282b" />
            </ToolButton>
          </div>
        </div>
        <div className="flex h-[17px] shrink-0 items-start border-b border-r border-[#a0a0a0]">
          <Grip />
          <div className="flex px-1">
            <ToolButton label="Layer properties">{stack}</ToolButton>
          </div>
          <Combo label="Layer" value="0" width="w-[298px] pl-[6px]" lead={<LayerState />} />
          <div className="flex gap-2 px-[3px]">
            <ToolButton label="Make object's layer current">
              {stack}
              <path d="M2 8L8 6L15 8L9 11Z" fill="#f0d020" stroke="#98860a" strokeWidth=".6" />
              <path d="M0 13.500L4 9.500M1 9.500H4V12.500" fill="none" stroke="#111" />
            </ToolButton>
            <ToolButton label="Layer previous">
              {stack}
              <path d="M10 -1C5 0 5 3 6 5H4L8 9L10 4H8C8 2 9 1 11 1Z" fill="#1c4b8f" />
            </ToolButton>
            <ToolButton label="Layer states manager">
              {stack}
              <rect x="5.500" y="4.500" width="9" height="8" fill="#fff" stroke="#17488f" />
              <path d="M5 5H15" stroke="#17488f" strokeWidth="2" />
              <path d="M7 8.500H13M7 10.500H12" stroke="#7ea3d4" />
            </ToolButton>
          </div>
        </div>
        <div className="flex h-[17px] shrink-0 items-start border-b border-r border-[#a0a0a0] pr-1">
          <Grip />
          <Combo label="Color" value="ByLayer" width="w-[149px] ml-[2px] pl-[5px]" lead={<span className="h-[10px] w-[10px] shrink-0 self-start bg-black" />} />
          <span className={separator} />
          <Combo label="Linetype" value="ByLayer" width="w-[159px] pl-1" lead={<span className="h-px w-[60px] shrink-0 bg-black" />} />
          <span className={separator} />
          <Combo label="Lineweight" value="Default" width="w-[124px] pl-1" lead={<span className="h-px w-[35px] shrink-0 bg-black" />} />
          <span className={separator} />
          <Combo label="Plot style" value="ByColor" width="w-[119px] border-x border-x-[#d0d0d0] pl-[9px]" disabled />
        </div>
      </div>
      <div className="h-px bg-[#a0a0a0]" />
    </header>
  );
}

/* ---------- layout tabs and scroll bar ---------- */

function LayoutBar() {
  return (
    <div className="flex h-[21px] border-t border-[#696969] bg-[#f0f0f0]">
      <div className="flex h-4 flex-1 items-start border-b border-[#e3e3e3] font-['Liberation_Mono','Noto_Sans_CJK_SC',monospace] text-black">
        <button type="button" className="flex h-[14px] w-[15px] justify-end overflow-hidden text-[10px] leading-[16px]">
          <span>Model</span>
        </button>
        <svg width="13" height="14" className="shrink-0" aria-hidden="true">
          <path d="M6 0H13V14H11Z" fill="#fff" />
          <path d="M5.500 0L10.500 13.500H13M6 13L9 6" fill="none" stroke="#696969" />
        </svg>
        <button type="button" className="flex h-[14px] items-center border-b border-[#808080] bg-white pl-[3px] text-[12px] leading-[16px]">
          布局<span className="text-[10px]">1</span>
        </button>
        <svg width="14" height="14" className="shrink-0" aria-hidden="true">
          <path d="M0 0H12L7 13.500H0Z" fill="#fff" />
          <path d="M12.500 0L7 13.500H0" fill="none" stroke="#696969" />
        </svg>
      </div>
      <div className="flex h-4 w-[476px] shrink-0 items-start border-b border-[#e3e3e3] bg-[#ebebeb]">
        <span className="h-[13px] w-[5px] rounded-[2px] border border-[#a0a0a0] bg-white" />
        <button type="button" aria-label="Scroll left" className="flex h-[14px] w-[17px] items-center justify-center bg-[#f0f0f0]">
          <svg width="4" height="7" aria-hidden="true">
            <path d="M4 0V7L0 3.500Z" fill="#222" />
          </svg>
        </button>
        <span className="ml-[59px] h-[13px] w-[15px] rounded-[1px] border border-[#8a8a8a] bg-gradient-to-b from-[#f4f4f4] to-[#cfcfcf]" />
      </div>
    </div>
  );
}

/* ---------- command window and balloon ---------- */

function CommandWindow() {
  return (
    <footer>
      <div className="h-px bg-[#a0a0a0]" />
      <div className="h-[11px] border-b border-t border-b-[#a0a0a0] border-t-[#696969] bg-[#f0f0f0]" />
      <div className="h-[24px] overflow-hidden border-b border-t border-b-[#a0a0a0] border-t-[#696969] bg-white">
        <p className="-ml-3 whitespace-pre text-[16px] leading-[12px] text-black">
          视口<span className="font-['Liberation_Mono',monospace] text-[14px]"> - </span>正在重生成布局。
        </p>
      </div>
      <div className="h-px bg-white" />
    </footer>
  );
}

function Balloon() {
  return (
    <aside className="absolute bottom-0 right-0 h-[61px] w-11 overflow-hidden rounded-tl-[14px] border-l border-t border-black bg-[#ffffe1] text-[12px] text-black">
      <div className="flex h-[28px] items-end gap-[10px] pl-[9px]">
        <svg width="16" height="15" viewBox="0 0 16 15" className="mb-[3px] shrink-0" aria-hidden="true">
          <path d="M8 1L15 14H1Z" fill="#f5c400" stroke="#a8a8b8" strokeLinejoin="round" />
          <path d="M8 5V9.500M8 11V12.500" stroke="#111" strokeWidth="2" />
        </svg>
        <strong className="mb-1 leading-[16px]">完</strong>
      </div>
      <p className="whitespace-nowrap pl-[14px] leading-[18px]">发现错</p>
      <a href="#details" className="block whitespace-nowrap pl-[14px] leading-[16px] text-[#0000ff]">
        单击以
      </a>
    </aside>
  );
}

export default function App() {
  return (
    <div className="relative flex min-h-screen flex-col overflow-hidden bg-[#f0f0f0] font-['Noto_Sans_CJK_SC',sans-serif]">
      <Toolbar />
      <Canvas />
      <LayoutBar />
      <CommandWindow />
      <Balloon />
    </div>
  );
}
